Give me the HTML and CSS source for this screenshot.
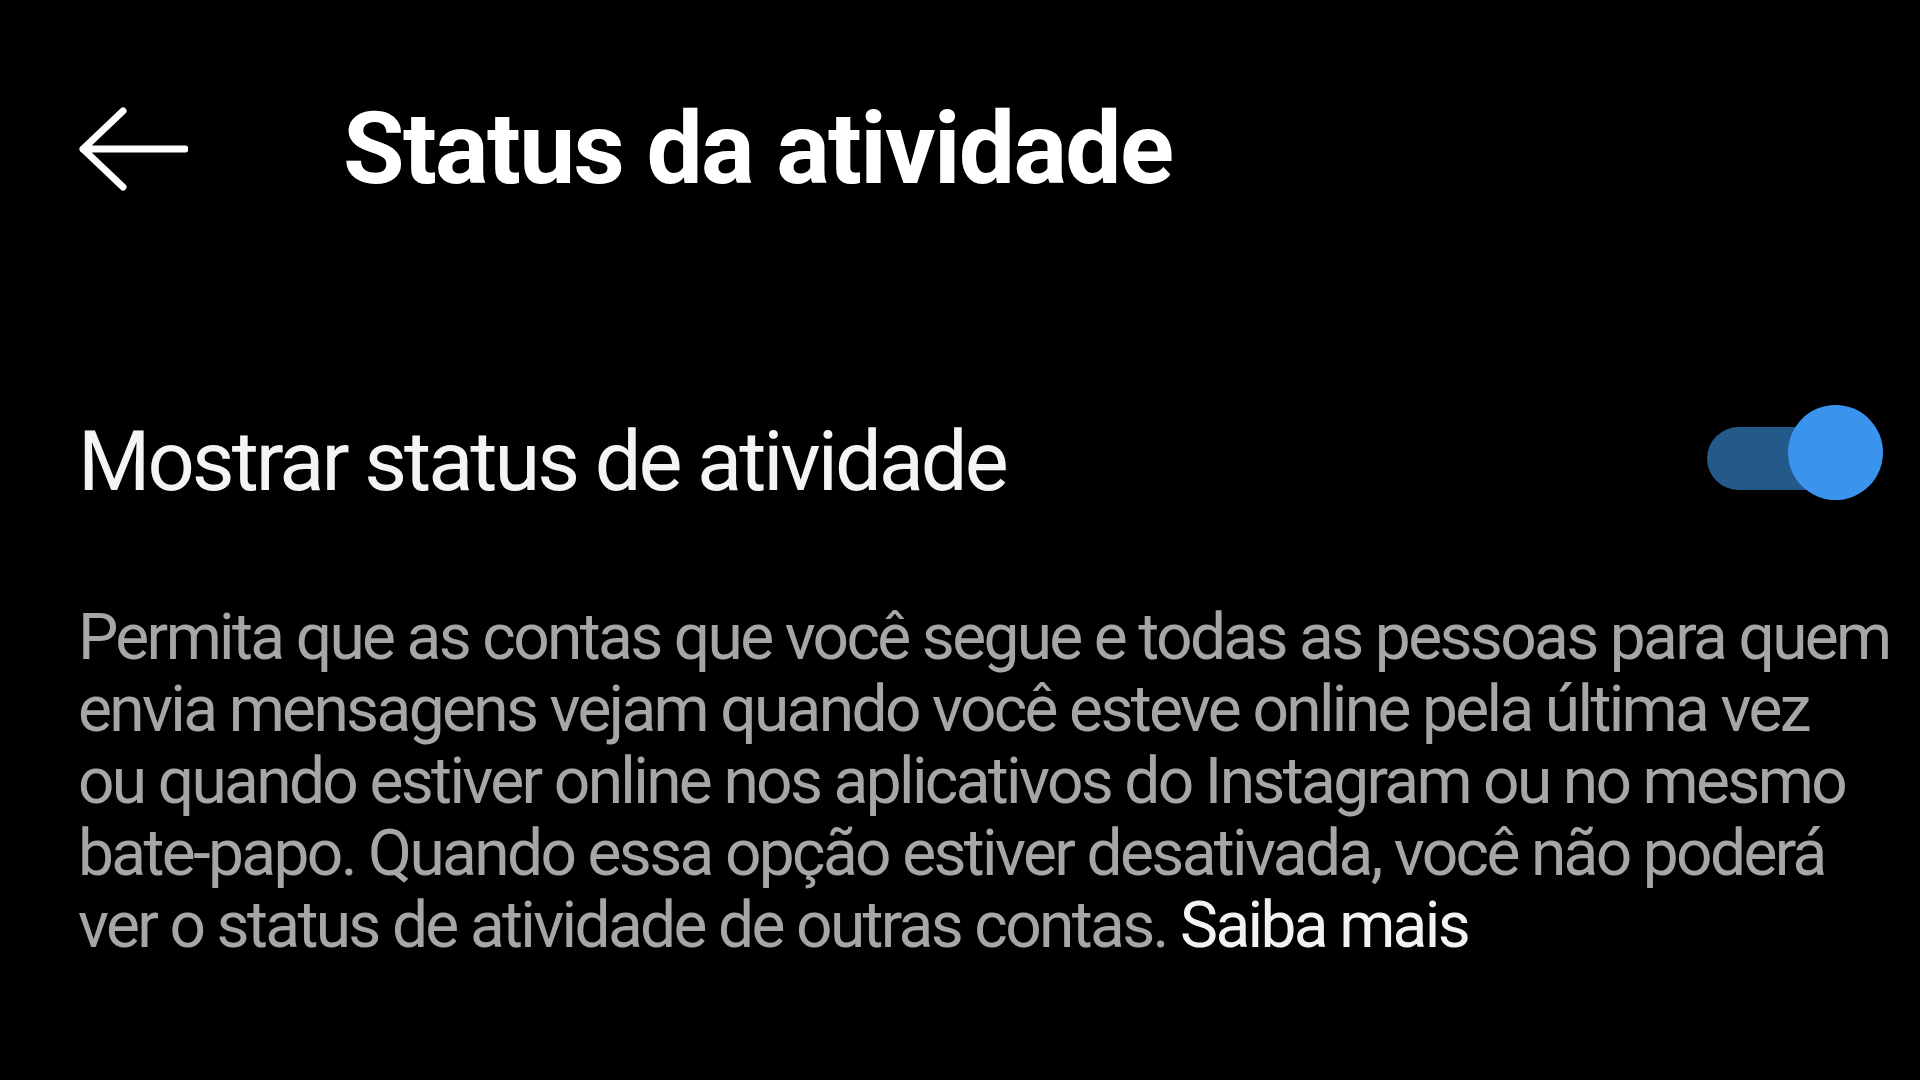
FILE: index.html
```html
<!DOCTYPE html>
<html lang="pt-BR">
<head>
<meta charset="utf-8">
<title>Status da atividade</title>
<link rel="stylesheet" href="styles.css">
</head>
<body>
<div class="screen">
  <header class="header">
    <svg class="back" width="110" height="90" viewBox="0 0 110 90" aria-hidden="true">
      <path d="M45 7 L5 45 L45 83 M5 45 L107 45" fill="none" stroke="#ffffff" stroke-width="7" stroke-linecap="round" stroke-linejoin="round"/>
    </svg>
    <h1 class="title">Status da atividade</h1>
  </header>
  <div class="row">
    <div class="label">Mostrar status de atividade</div>
    <div class="toggle"><div class="track"></div><div class="knob"></div></div>
  </div>
  <p class="desc">Permita que as contas que você segue e todas as pessoas para quem<br>envia mensagens vejam quando você esteve online pela última vez<br>ou quando estiver online nos aplicativos do Instagram ou no mesmo<br>bate-papo. Quando essa opção estiver desativada, você não poderá<br>ver o status de atividade de outras contas. <span class="link">Saiba mais</span></p>
</div>
</body>
</html>
```
FILE: styles.css
```css
html, body {
  margin: 0;
  padding: 0;
  background: #000000;
}
body {
  width: 1920px;
  height: 1080px;
  overflow: hidden;
  font-family: Roboto, "Noto Sans", sans-serif;
}
.screen {
  padding: 99px 34px 0 78px;
}
.header {
  display: flex;
  align-items: center;
  height: 100px;
}
.back {
  display: block;
  flex: none;
}
.title {
  margin: 0 0 0 155px;
  font-size: 100px;
  line-height: 100px;
  font-weight: 700;
  letter-spacing: -1.65px;
  color: #ffffff;
  white-space: nowrap;
}
.row {
  display: flex;
  justify-content: space-between;
  align-items: flex-start;
  margin-top: 206px;
}
.label {
  margin-top: 15px;
  font-size: 83px;
  line-height: 83px;
  letter-spacing: -3px;
  color: #f4f4f4;
  white-space: nowrap;
}
.toggle {
  position: relative;
  width: 176px;
  height: 95px;
  margin-right: 3px;
  flex: none;
}
.track {
  position: absolute;
  left: 0;
  top: 22px;
  width: 150px;
  height: 63px;
  border-radius: 32px;
  background: #235a8a;
}
.knob {
  position: absolute;
  right: 0;
  top: 0;
  width: 95px;
  height: 95px;
  border-radius: 50%;
  background: #3a94ee;
}
.desc {
  margin: 99px 0 0 0;
  font-size: 64px;
  line-height: 72px;
  letter-spacing: -2.65px;
  color: #a6a6a6;
  white-space: nowrap;
}
.link {
  color: #f2f2f2;
}
```
